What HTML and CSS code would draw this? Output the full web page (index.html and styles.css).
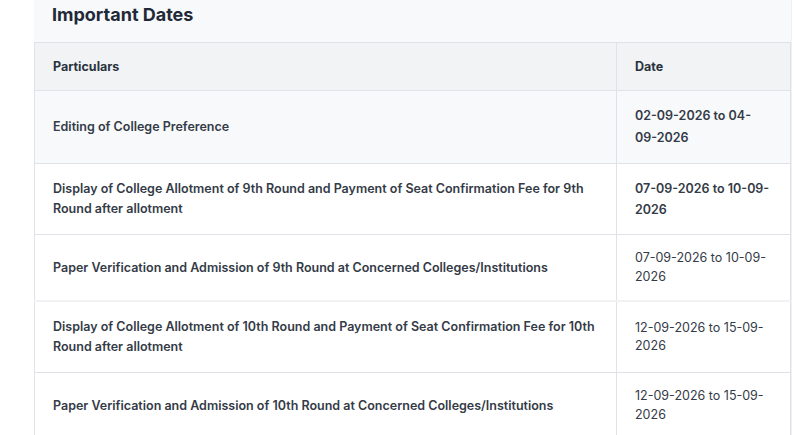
FILE: index.html
```html
<!DOCTYPE html>
<html lang="en">
<head>
<meta charset="utf-8">
<title>Important Dates</title>
<link rel="stylesheet" href="styles.css">
</head>
<body>
<div class="page">
  <section class="card">
    <h2 class="card-title">Important Dates</h2>
    <table class="dates">
      <thead>
        <tr><th class="col-part">Particulars</th><th class="col-date">Date</th></tr>
      </thead>
      <tbody>
        <tr class="hl">
          <td>Editing of College Preference</td>
          <td class="d strong">02-09-2026 to 04-09-2026</td>
        </tr>
        <tr class="r2">
          <td>Display of College Allotment of 9th Round and Payment of Seat Confirmation Fee for 9th Round after allotment</td>
          <td class="d strong">07-09-2026 to 10-09-2026</td>
        </tr>
        <tr class="soft">
          <td>Paper Verification and Admission of 9th Round at Concerned Colleges/Institutions</td>
          <td class="d">07-09-2026 to 10-09-2026</td>
        </tr>
        <tr class="tall">
          <td>Display of College Allotment of 10th Round and Payment of Seat Confirmation Fee for 10th Round after allotment</td>
          <td class="d">12-09-2026 to 15-09-2026</td>
        </tr>
        <tr>
          <td>Paper Verification and Admission of 10th Round at Concerned Colleges/Institutions</td>
          <td class="d">12-09-2026 to 15-09-2026</td>
        </tr>
      </tbody>
    </table>
  </section>
</div>
</body>
</html>
```
FILE: styles.css
```css
html, body {
  margin: 0;
  padding: 0;
  background: #ffffff;
}
body {
  font-family: Inter, "Noto Sans", sans-serif;
  color: #2b3340;
  overflow: hidden;
}
.page {
  padding-left: 34px;
  width: 758px;
}
.card {
  background: #f8f9fb;
  border-right: 1px solid #eef0f3;
}
.card-title {
  margin: 0;
  padding: 1px 18px 13px;
  font-size: 18px;
  line-height: 28px;
  font-weight: 700;
  color: #1f2937;
}
.dates {
  width: 757px;
  border-collapse: collapse;
  font-size: 12.5px;
  table-layout: fixed;
}
.dates th, .dates td {
  border: 1px solid #dfe2e7;
  padding: 14px 18px;
  text-align: left;
  vertical-align: middle;
  line-height: 20px;
}
.dates th {
  background: #f2f3f5;
  font-weight: 700;
  color: #2b3340;
  padding-top: 14px;
  padding-bottom: 13px;
}
.col-part { width: auto; }
.col-date { width: 137px; }
.dates td {
  background: #ffffff;
  font-weight: 600;
  color: #343b47;
}
.dates tr.hl td {
  background: #f8f9fb;
}
.dates tr.soft td {
  border-bottom: 2px solid #f1f2f4;
}
.dates tr.tall td {
  padding-top: 15px;
  padding-bottom: 15px;
}
.dates td.d {
  font-weight: 400;
  line-height: 18.5px;
}
.dates td.d.strong {
  font-weight: 600;
  line-height: 22px;
}
.dates tr.r2 td.d.strong {
  line-height: 21px;
}
```
